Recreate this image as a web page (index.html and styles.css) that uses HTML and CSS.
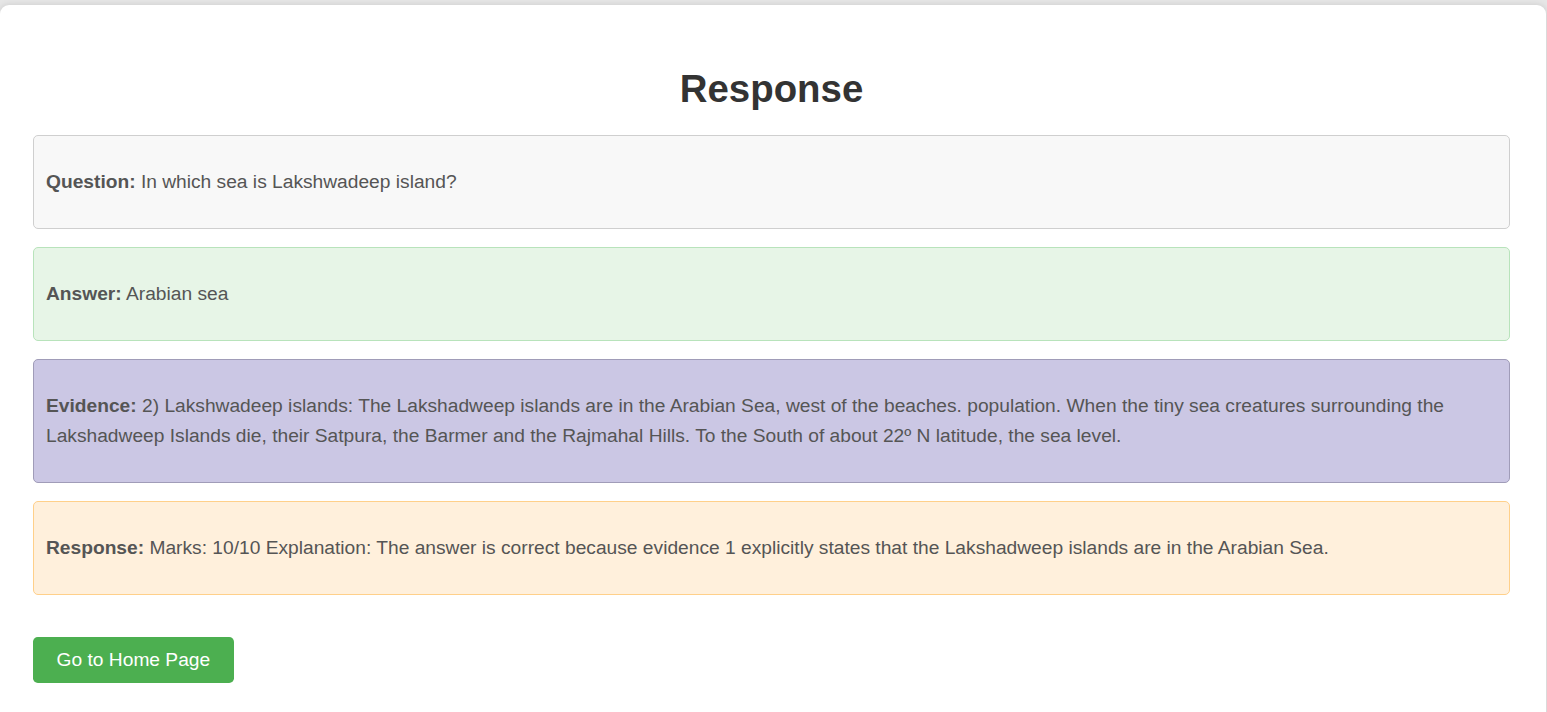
FILE: index.html
```html
<!DOCTYPE html>
<html lang="en">
<head>
<meta charset="utf-8">
<title>Response</title>
<link rel="stylesheet" href="styles.css">
</head>
<body>
<div class="card">
  <h1 class="title">Response</h1>
  <div class="box box-question"><p><strong>Question:</strong> In which sea is Lakshwadeep island?</p></div>
  <div class="box box-answer"><p><strong>Answer:</strong> Arabian sea</p></div>
  <div class="box box-evidence"><p><strong>Evidence:</strong> 2) Lakshwadeep islands: The Lakshadweep islands are in the Arabian Sea, west of the beaches. population. When the tiny sea creatures surrounding the Lakshadweep Islands die, their Satpura, the Barmer and the Rajmahal Hills. To the South of about 22º N latitude, the sea level.</p></div>
  <div class="box box-response"><p><strong>Response:</strong> Marks: 10/10 Explanation: The answer is correct because evidence 1 explicitly states that the Lakshadweep islands are in the Arabian Sea.</p></div>
  <div class="actions"><a class="btn" href="#">Go to Home Page</a></div>
</div>
</body>
</html>
```
FILE: styles.css
```css
html, body {
  margin: 0;
  padding: 0;
}
body {
  background: #e6e6e6;
  font-family: "Liberation Sans", Arial, sans-serif;
  color: #555;
  font-size: 19.2px;
  overflow: hidden;
}
.card {
  margin-top: 5px;
  width: 1546px;
  min-height: 720px;
  box-sizing: border-box;
  background: #fff;
  border-radius: 9px;
  box-shadow: 0 0 6px rgba(0, 0, 0, 0.12);
  padding: 20px 36px 20px 33px;
}
.title {
  margin: 42px 0 24px;
  text-align: center;
  font-size: 38.4px;
  line-height: 44px;
  font-weight: bold;
  color: #333;
}
.box {
  border: 1px solid #ccc;
  border-radius: 5px;
  padding: 12px 12px;
  margin-bottom: 18px;
}
.box p {
  margin: 18.85px 0;
  line-height: 30.3px;
}
.box strong {
  color: #555;
}
.box-question {
  background: #f8f8f8;
  border-color: #cfcfcf;
}
.box-answer {
  background: #e7f5e7;
  border-color: #b8e3bb;
}
.box-evidence {
  background: #cbc7e4;
  border-color: #a09cb8;
}
.box-response {
  background: #fff0dc;
  border-color: #ffd08a;
}
.actions {
  padding-top: 23.6px;
}
.btn {
  display: inline-block;
  background: #4caf50;
  color: #fff;
  text-decoration: none;
  padding: 12px 23.6px;
  border-radius: 4.8px;
  font-size: 19.2px;
  line-height: 22px;
}
```
